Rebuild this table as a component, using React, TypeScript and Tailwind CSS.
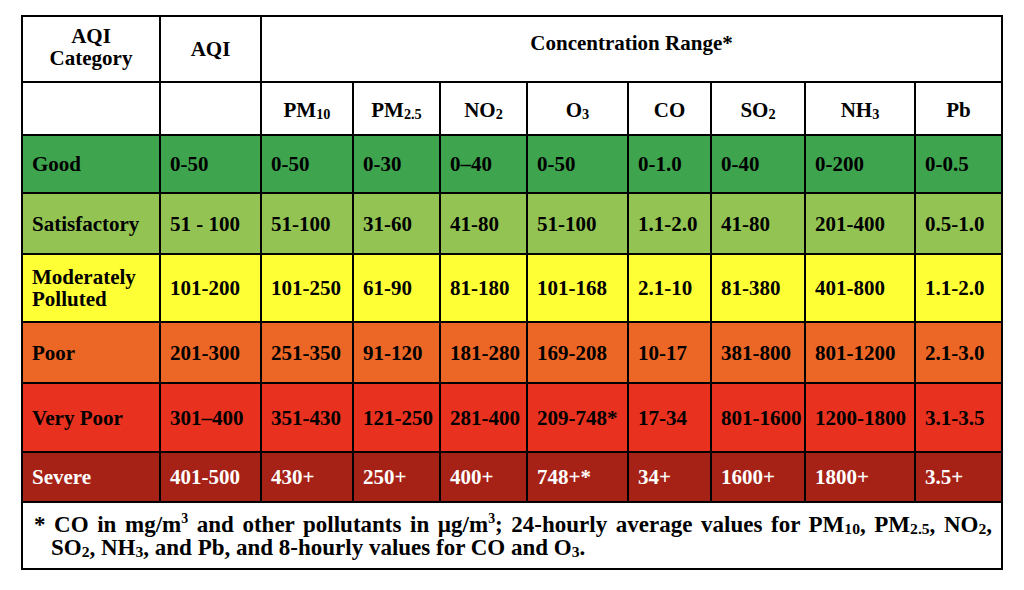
import React from 'react'

type Row = {
  label: React.ReactNode
  values: string[]
  bg: string
  h: string
  text?: string
}

const rows: Row[] = [
  { label: 'Good', values: ['0-50', '0-50', '0-30', '0–40', '0-50', '0-1.0', '0-40', '0-200', '0-0.5'], bg: 'bg-[#3ea44e]', h: 'h-[58px]' },
  { label: 'Satisfactory', values: ['51 - 100', '51-100', '31-60', '41-80', '51-100', '1.1-2.0', '41-80', '201-400', '0.5-1.0'], bg: 'bg-[#93c453]', h: 'h-[61px]' },
  {
    label: (
      <>
        Moderately
        <br />
        Polluted
      </>
    ),
    values: ['101-200', '101-250', '61-90', '81-180', '101-168', '2.1-10', '81-380', '401-800', '1.1-2.0'],
    bg: 'bg-[#ffff36]',
    h: 'h-[68px]',
  },
  { label: 'Poor', values: ['201-300', '251-350', '91-120', '181-280', '169-208', '10-17', '381-800', '801-1200', '2.1-3.0'], bg: 'bg-[#ec6725]', h: 'h-[61px]' },
  { label: 'Very Poor', values: ['301–400', '351-430', '121-250', '281-400', '209-748*', '17-34', '801-1600', '1200-1800', '3.1-3.5'], bg: 'bg-[#e8311e]', h: 'h-[69px]' },
  { label: 'Severe', values: ['401-500', '430+', '250+', '400+', '748+*', '34+', '1600+', '1800+', '3.5+'], bg: 'bg-[#a62216]', h: 'h-[50px]', text: 'text-white' },
]

const Sub = ({ children }: { children: React.ReactNode }) => (
  <sub className="text-[0.68em] leading-none bottom-[-0.15em]">{children}</sub>
)

const Sup = ({ children }: { children: React.ReactNode }) => (
  <sup className="text-[0.6em] leading-none top-[-0.6em]">{children}</sup>
)

const pollutants: React.ReactNode[] = [
  <>PM<Sub>10</Sub></>,
  <>PM<Sub>2.5</Sub></>,
  <>NO<Sub>2</Sub></>,
  <>O<Sub>3</Sub></>,
  <>CO</>,
  <>SO<Sub>2</Sub></>,
  <>NH<Sub>3</Sub></>,
  <>Pb</>,
]

const cell = 'border-2 border-black'

export default function App() {
  return (
    <div className="h-[590px] w-[1024px] bg-white pl-[21px] pt-[15px] font-['Liberation_Serif',serif] font-bold text-[21px] leading-[22px] text-black">
      <table className="table-fixed w-[980px] border-collapse border-2 border-black">
        <colgroup>
          <col className="w-[138px]" />
          <col className="w-[101px]" />
          <col className="w-[92px]" />
          <col className="w-[87px]" />
          <col className="w-[87px]" />
          <col className="w-[101px]" />
          <col className="w-[83px]" />
          <col className="w-[94px]" />
          <col className="w-[110px]" />
          <col className="w-[87px]" />
        </colgroup>
        <tbody>
          {/* header */}
          <tr className="h-[66px]">
            <td className={`${cell} text-center align-middle pb-[4px]`}>
              AQI
              <br />
              Category
            </td>
            <td className={`${cell} text-center align-middle`}>AQI</td>
            <td colSpan={8} className={`${cell} text-center align-top pt-[15px]`}>
              Concentration Range*
            </td>
          </tr>
          <tr className="h-[53px]">
            <td className={cell}></td>
            <td className={cell}></td>
            {pollutants.map((p, i) => (
              <td key={i} className={`${cell} text-center align-middle pt-[2px]`}>
                {p}
              </td>
            ))}
          </tr>

          {/* categories */}
          {rows.map((r, i) => (
            <tr key={i} className={`${r.h} ${r.bg} ${r.text ?? ''}`}>
              <td className={`${cell} pl-[9px] align-middle`}>{r.label}</td>
              {r.values.map((v, j) => (
                <td key={j} className={`${cell} pl-[9px] pr-0 align-middle whitespace-nowrap`}>
                  {v}
                </td>
              ))}
            </tr>
          ))}

          {/* footnote */}
          <tr className="h-[67px]">
            <td colSpan={10} className={`${cell} pl-[11px] pr-[9px] align-middle text-[23px] leading-[23px]`}>
              <div className="text-justify [text-align-last:justify]">
                * CO in mg/m<Sup>3</Sup> and other pollutants in µg/m<Sup>3</Sup>; 24-hourly average values for PM
                <Sub>10</Sub>, PM<Sub>2.5</Sub>, NO<Sub>2</Sub>,
              </div>
              <div className="pl-[17px]">
                SO<Sub>2</Sub>, NH<Sub>3</Sub>, and Pb, and 8-hourly values for CO and O<Sub>3</Sub>.
              </div>
            </td>
          </tr>
        </tbody>
      </table>
    </div>
  )
}
